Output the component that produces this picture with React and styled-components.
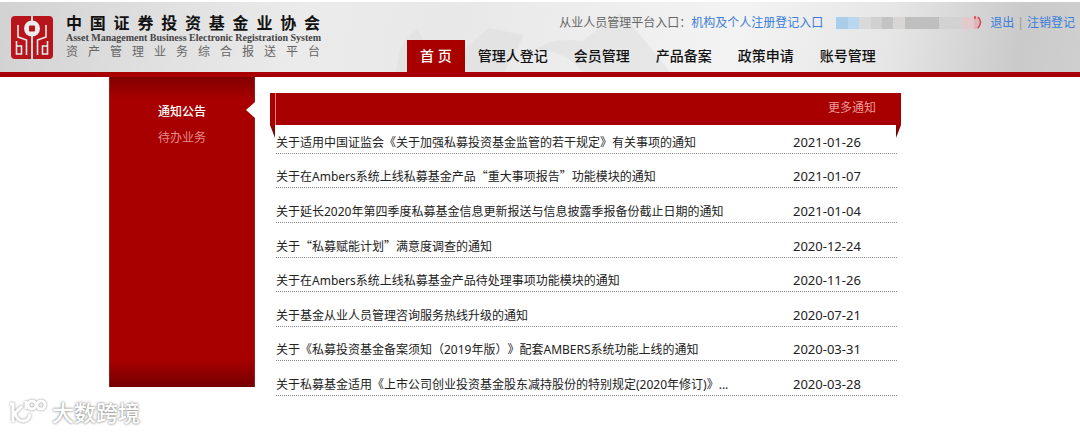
import React from 'react'
import styled, { createGlobalStyle } from 'styled-components'

const GlobalStyle = createGlobalStyle`
    * {
        box-sizing: border-box;
    }

    body {
        margin: 0;
        background: #fff;
        color: #222;
        font-family: 'Noto Sans', 'Noto Sans CJK SC', sans-serif;
        font-size: 12px;
        line-height: 18px;
        text-spacing-trim: space-all;
    }

    a {
        color: inherit;
        text-decoration: none;
    }
`

const StyledHeader = styled.header`
    position: relative;
    display: flex;
    margin-top: 2px;
    border-bottom: 5px solid #a80000;
    background: linear-gradient(
        100deg,
        #d2d2d2 0%,
        #dfdfdf 14%,
        #ebebeb 28%,
        #e8e8e8 42%,
        #f3f3f3 68%,
        #e6e6e6 82%,
        #cacaca 94%,
        #cfcfcf 100%
    );
`

const Petals = styled.svg`
    position: absolute;
    left: 320px;
    bottom: 0;
`

const Brand = styled.a`
    position: relative;
    display: flex;
    align-items: flex-start;
    gap: 13px;
    padding: 13px 0 0 11px;
    color: #111;
`

const BrandText = styled.div`
    display: flex;
    flex-direction: column;
    width: 254px;
`

const BrandName = styled.strong`
    font-size: 16px;
    line-height: 16px;
    font-weight: 700;
    text-align-last: justify;
`

const BrandEnglish = styled.span`
    color: #444;
    font-family: 'Liberation Serif', serif;
    font-size: 10px;
    line-height: 14px;
    font-weight: 700;
    white-space: nowrap;
`

const BrandSystem = styled.span`
    color: #666;
    font-size: 12px;
    line-height: 14px;
    text-align-last: justify;
`

const HeaderMain = styled.div`
    position: relative;
    flex: 1;
    display: flex;
    flex-direction: column;
    margin-left: 87px;
`

const Account = styled.div`
    display: flex;
    justify-content: flex-end;
    align-items: center;
    padding: 12px 5px 8px 0;
    color: #666;
    white-space: nowrap;
`

const AccountLink = styled.a`
    color: #3b7dd8;
`

const MaskedUser = styled.svg`
    margin: 0 6px 0 13px;
`

const Divider = styled.span`
    margin: 0 3px;
    color: #999;
`

const Nav = styled.nav`
    display: flex;
    font-size: 14px;
    line-height: 32px;
`

const NavLink = styled.a`
    padding: 0 13px;
    color: ${({ $active }) => ($active ? '#fff' : '#111')};
    background: ${({ $active }) => ($active ? '#a80000' : 'transparent')};
    font-weight: 500;
    white-space: nowrap;
`

const Page = styled.main`
    display: flex;
    align-items: flex-start;
    gap: 15px;
    max-width: 862px;
    margin: 0 auto;
    padding-right: 70px;
`

const Sidebar = styled.aside`
    flex: 0 0 146px;
    display: flex;
    flex-direction: column;
    min-height: 310px;
    padding-top: 22px;
    border: solid #96201c;
    border-width: 0 1px;
    background: linear-gradient(
        #820000 0,
        #a80000 22px,
        #a80000 calc(100% - 28px),
        #740000 100%
    );
`

const SideLink = styled.a`
    position: relative;
    padding-left: 48px;
    line-height: 26px;
    color: ${({ $active }) => ($active ? '#fff' : '#e68a8a')};
    font-weight: ${({ $active }) => ($active ? 500 : 400)};

    &::after {
        content: '';
        display: ${({ $active }) => ($active ? 'block' : 'none')};
        position: absolute;
        right: -1px;
        top: 3px;
        border: solid transparent;
        border-width: 8px 9px 8px 0;
        border-right-color: #fff;
    }
`

const Panel = styled.section`
    flex: 1;
    min-width: 0;
    padding-top: 16px;
`

const PanelHeader = styled.div`
    position: relative;
    display: flex;
    justify-content: flex-end;
    padding: 6px 25px 8px;
    background: linear-gradient(90deg, #a80000 5px, #d98080 5px, #d98080 6px, #a80000 6px);
    color: #ec9a9a;

    &::before,
    &::after {
        content: '';
        position: absolute;
        top: 100%;
        width: 5px;
        height: 13px;
        background: linear-gradient(#9c0000, #5e0808);
    }

    &::before {
        left: 0;
        clip-path: polygon(0 0, 100% 0, 100% 100%);
    }

    &::after {
        right: 0;
        clip-path: polygon(0 0, 100% 0, 0 100%);
    }
`

const NoticeList = styled.ul`
    display: grid;
    grid-auto-rows: 1fr;
    min-height: 277px;
    margin: -6px 4px 0 6px;
    padding: 0;
    list-style: none;
`

const NoticeRow = styled.li`
    display: flex;
    align-items: flex-end;
    justify-content: space-between;
    padding-bottom: 1px;
    border-bottom: 1px dotted #888;
`

const NoticeTitle = styled.a`
    overflow: hidden;
    text-overflow: ellipsis;
    white-space: nowrap;
`

const Quoted = styled.span`
    font-family: 'Noto Sans CJK SC', sans-serif;
`

const NoticeDate = styled.time`
    flex: 0 0 104px;
    font-size: 13px;
    line-height: 20px;
`

const Watermark = styled.footer`
    display: flex;
    align-items: center;
    gap: 4px;
    padding: 2px 0 4px 8px;
    color: #fff;
    font-size: 22px;
    font-weight: 500;
    line-height: 28px;
    text-shadow: 0 0 2px #888, 0 0 3px #aaa;
`

const WatermarkIcon = styled.svg`
    filter: drop-shadow(0 0 1px #888);
`

const navItems = ['首 页', '管理人登记', '会员管理', '产品备案', '政策申请', '账号管理']

const notices = [
    {
        title: '关于适用中国证监会《关于加强私募投资基金监管的若干规定》有关事项的通知',
        date: '2021-01-26',
    },
    {
        title: '关于在Ambers系统上线私募基金产品“重大事项报告”功能模块的通知',
        date: '2021-01-07',
    },
    {
        title: '关于延长2020年第四季度私募基金信息更新报送与信息披露季报备份截止日期的通知',
        date: '2021-01-04',
    },
    { title: '关于“私募赋能计划”满意度调查的通知', date: '2020-12-24' },
    {
        title: '关于在Ambers系统上线私募基金产品待处理事项功能模块的通知',
        date: '2020-11-26',
    },
    { title: '关于基金从业人员管理咨询服务热线升级的通知', date: '2020-07-21' },
    {
        title: '关于《私募投资基金备案须知（2019年版）》配套AMBERS系统功能上线的通知',
        date: '2020-03-31',
    },
    {
        title: '关于私募基金适用《上市公司创业投资基金股东减持股份的特别规定(2020年修订)》...',
        date: '2020-03-28',
    },
]

// [x, width, color] of each block over the user name
const maskBlocks = [
    [0, 12, '#aacde9'],
    [12, 11, '#b9d7ee'],
    [23, 12, '#d9d9d9'],
    [35, 11, '#d0d0d0'],
    [46, 11, '#c3c3c3'],
    [57, 12, '#d7d6d4'],
    [69, 34, '#bfbfbf'],
    [103, 23, '#d2d2d2'],
    [126, 12, '#e3c9cb'],
    [138, 5, '#dfb4ba'],
]

// full-width quotes only exist in the CJK font
const renderTitle = (title) =>
    title
        .split(/(“.*?”)/)
        .map((part, i) => (i % 2 ? <Quoted key={i}>{part}</Quoted> : part))

const Logo = () => (
    <svg width="42" height="44" viewBox="0 0 42 44" aria-hidden="true">
        <path
            d="M4 1H20V44H4Q0 44 0 40V5Q0 1 4 1ZM22 1H38Q42 1 42 5V40Q42 44 38 44H22Z"
            fill="#b8141c"
        />
        <g fill="none" stroke="#ececec" strokeWidth="1.6">
            <path d="M7 10V22L15.500 25V40" />
            <path d="M5.500 26V39H10.500V31H5.500" />
            <path d="M35 10V22L26.500 25V40" />
            <path d="M36.500 26V39H31.500V31H36.500" />
        </g>
        <circle cx="21" cy="13.500" r="8" fill="#ececec" />
        <rect x="18" y="10.500" width="6" height="6" rx="1" fill="#b8141c" />
    </svg>
)

const HeaderPetals = () => (
    <Petals width="360" height="69" viewBox="0 0 360 69" aria-hidden="true">
        <g fill="#d8d8d8" opacity="0.35">
            <path d="M80 47Q88 32 96 27Q102 30 104 42L94 69H76Z" />
            <path d="M146 45L168 25L204 32Q196 48 184 69H146Z" />
            <path d="M216 46Q232 34 262 38L300 10Q320 30 350 69H262Q250 50 216 46Z" />
        </g>
    </Petals>
)

const MaskedName = () => (
    <MaskedUser width="148" height="14" viewBox="0 0 148 14" aria-hidden="true">
        {maskBlocks.map(([x, width, color]) => (
            <rect key={x} x={x} y="1" width={width} height="12" fill={color} />
        ))}
        <path
            d="M139 0V3M142 1Q147 6 142 12"
            fill="none"
            stroke="#d04a52"
            strokeWidth="1.6"
        />
    </MaskedUser>
)

const Header = () => (
    <StyledHeader>
        <HeaderPetals />
        <Brand href="#">
            <Logo />
            <BrandText>
                <BrandName>中国证券投资基金业协会</BrandName>
                <BrandEnglish>
                    Asset Management Business Electronic Registration System
                </BrandEnglish>
                <BrandSystem>资产管理业务综合报送平台</BrandSystem>
            </BrandText>
        </Brand>
        <HeaderMain>
            <Account>
                <span>从业人员管理平台入口：</span>
                <AccountLink href="#">机构及个人注册登记入口</AccountLink>
                <MaskedName />
                <AccountLink href="#">退出</AccountLink>
                <Divider>|</Divider>
                <AccountLink href="#">注销登记</AccountLink>
            </Account>
            <Nav>
                {navItems.map((item, i) => (
                    <NavLink key={item} href="#" $active={i === 0}>
                        {item}
                    </NavLink>
                ))}
            </Nav>
        </HeaderMain>
    </StyledHeader>
)

const App = () => (
    <>
        <GlobalStyle />
        <Header />
        <Page>
            <Sidebar>
                <SideLink href="#" $active>
                    通知公告
                </SideLink>
                <SideLink href="#">待办业务</SideLink>
            </Sidebar>
            <Panel>
                <PanelHeader>
                    <a href="#">更多通知</a>
                </PanelHeader>
                <NoticeList>
                    {notices.map(({ title, date }) => (
                        <NoticeRow key={date}>
                            <NoticeTitle href="#">{renderTitle(title)}</NoticeTitle>
                            <NoticeDate dateTime={date}>{date}</NoticeDate>
                        </NoticeRow>
                    ))}
                </NoticeList>
            </Panel>
        </Page>
        <Watermark>
            <WatermarkIcon
                width="40"
                height="26"
                viewBox="0 0 40 26"
                fill="none"
                stroke="#fff"
                strokeWidth="3"
                aria-hidden="true"
            >
                <path d="M2 5H5V23M14 7L7 14Q9 22 15 22Q21 22 22 15" />
                <path d="M18 2V10" />
                <circle cx="24" cy="6" r="4" />
                <circle cx="33" cy="6" r="4" />
            </WatermarkIcon>
            <span>大数跨境</span>
        </Watermark>
    </>
)

export default App
